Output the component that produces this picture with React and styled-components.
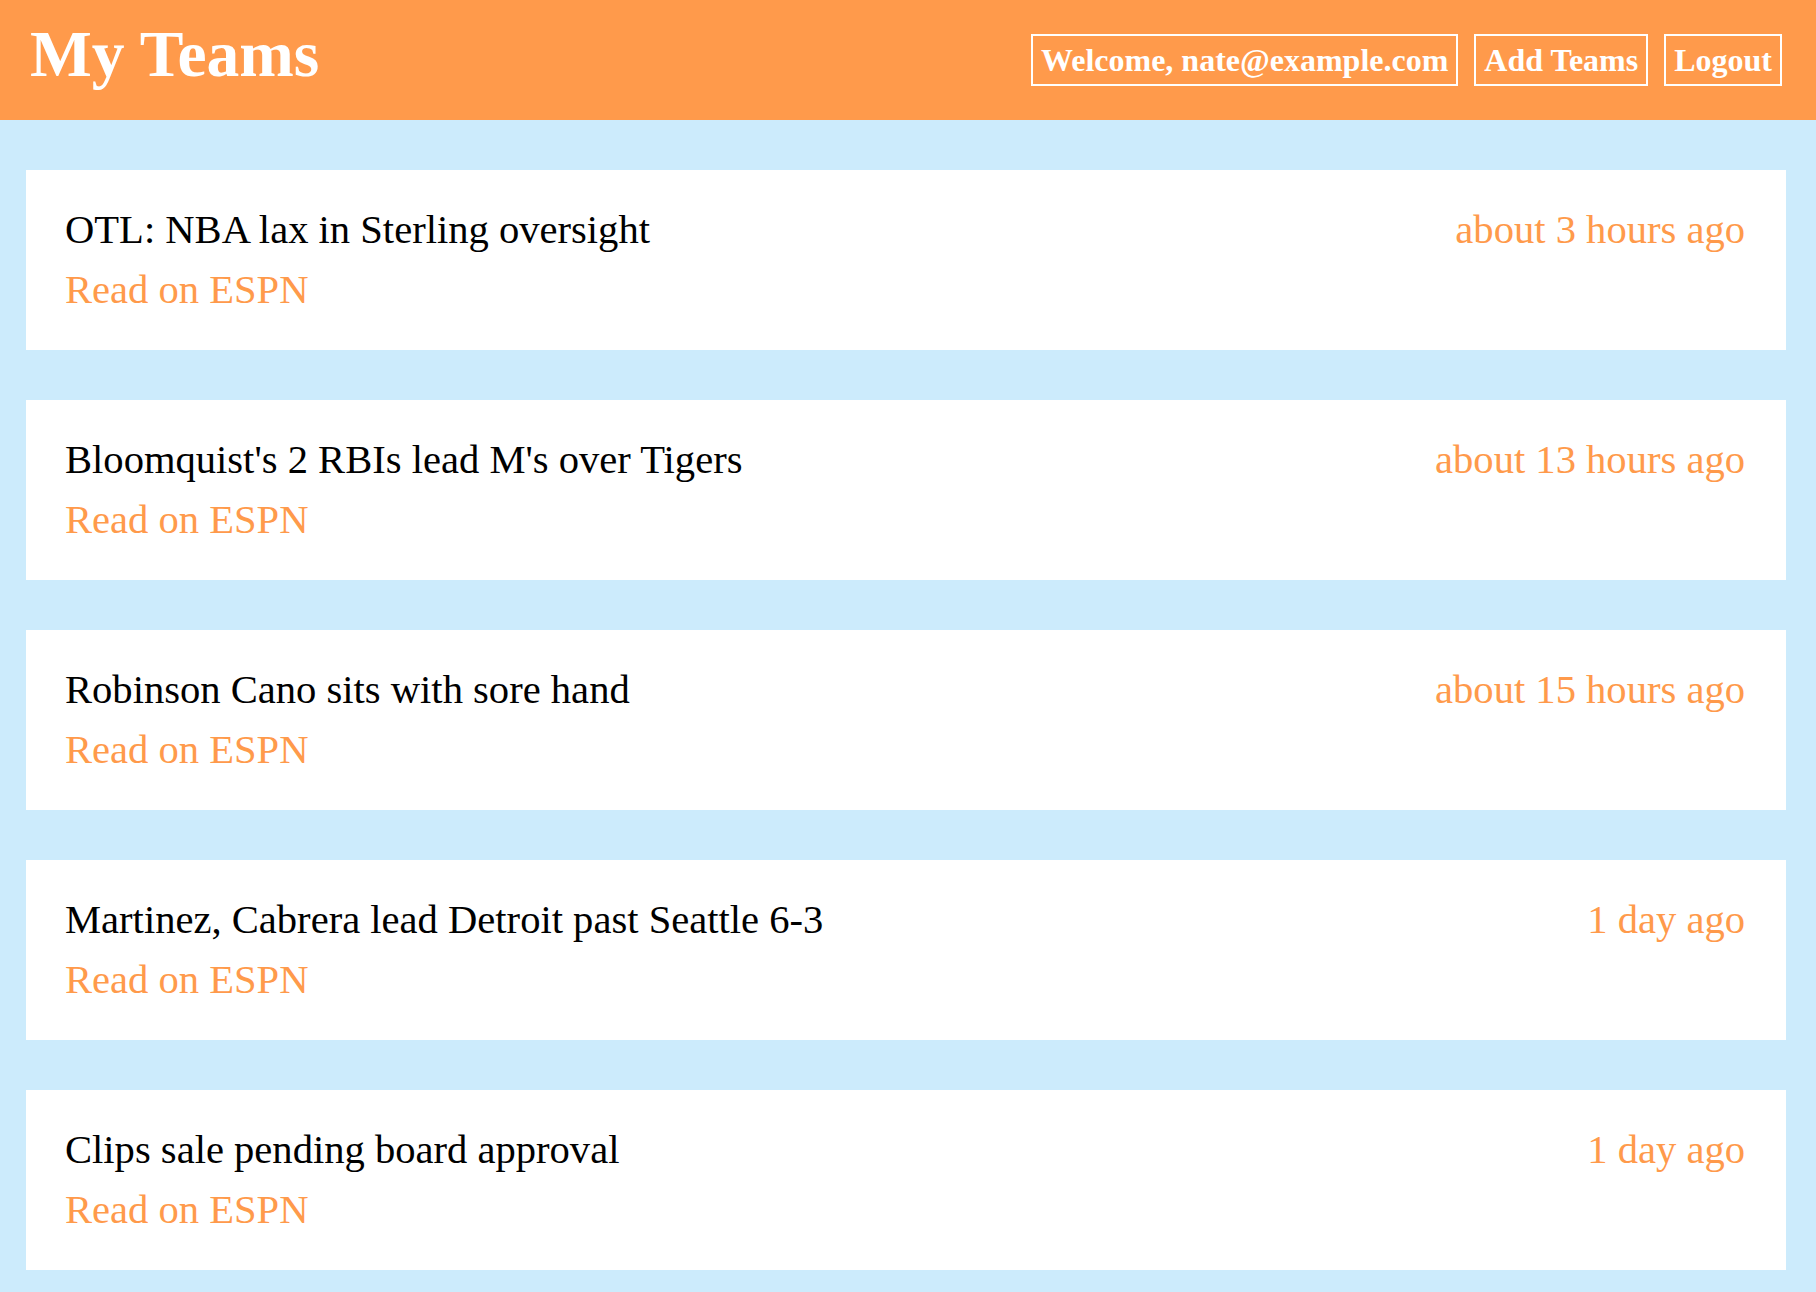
import styled, { createGlobalStyle } from "styled-components";

const GlobalStyle = createGlobalStyle`
  html, body {
    margin: 0;
    padding: 0;
    background: #ccebfc;
    font-family: "Liberation Serif", "Times New Roman", serif;
  }
`;

const Header = styled.header`
  height: 120px;
  background: #ff9a4b;
  display: flex;
  align-items: center;
  justify-content: space-between;
  padding: 0 34px 0 30px;
  box-sizing: border-box;
`;

const Title = styled.h1`
  margin: 0 0 11px;
  font-size: 65.5px;
  font-weight: bold;
  color: #fff;
  line-height: normal;
`;

const Nav = styled.nav`
  display: flex;
  gap: 16px;
`;

const NavButton = styled.a`
  display: block;
  border: 2px solid #fff;
  padding: 6px 8px;
  line-height: 36px;
  font-size: 32px;
  font-weight: bold;
  color: #fff;
  text-decoration: none;
  cursor: pointer;
`;

const Feed = styled.main`
  display: flex;
  flex-direction: column;
  gap: 50px;
  padding: 50px 30px 22px 26px;
`;

const Card = styled.article`
  background: #fff;
  padding: 30px 41px 30px 39px;
  display: flex;
  justify-content: space-between;
  align-items: flex-start;
  font-size: 40.6px;
  line-height: 60px;
`;

const Info = styled.div`
  display: flex;
  flex-direction: column;
`;

const Headline = styled.div`
  color: #000;
`;

const ReadLink = styled.a`
  color: #ff9a4b;
  text-decoration: none;
`;

const Time = styled.div`
  color: #ff9a4b;
  white-space: nowrap;
`;

const stories = [
  { title: "OTL: NBA lax in Sterling oversight", time: "about 3 hours ago" },
  { title: "Bloomquist's 2 RBIs lead M's over Tigers", time: "about 13 hours ago" },
  { title: "Robinson Cano sits with sore hand", time: "about 15 hours ago" },
  { title: "Martinez, Cabrera lead Detroit past Seattle 6-3", time: "1 day ago" },
  { title: "Clips sale pending board approval", time: "1 day ago" },
];

const App = () => {
  return (
    <>
      <GlobalStyle />
      <Header>
        <Title>My Teams</Title>
        <Nav>
          <NavButton>Welcome, nate@example.com</NavButton>
          <NavButton>Add Teams</NavButton>
          <NavButton>Logout</NavButton>
        </Nav>
      </Header>
      <Feed>
        {stories.map((s) => (
          <Card key={s.title}>
            <Info>
              <Headline>{s.title}</Headline>
              <ReadLink href="#">Read on ESPN</ReadLink>
            </Info>
            <Time>{s.time}</Time>
          </Card>
        ))}
      </Feed>
    </>
  );
};

export default App;
